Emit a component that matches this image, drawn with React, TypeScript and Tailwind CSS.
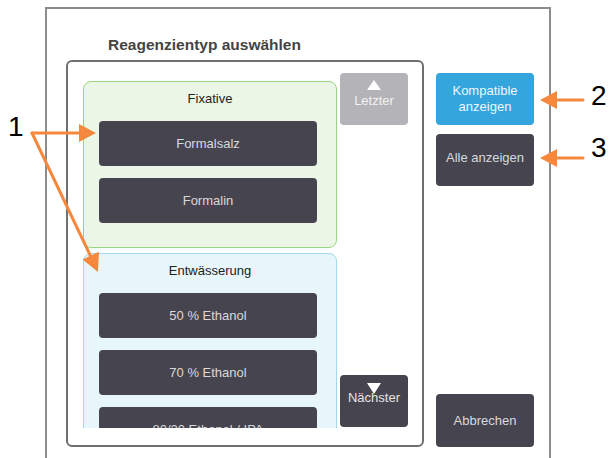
const font = { fontFamily: '"Liberation Sans", Arial, sans-serif' };

const ReagentButton = ({ label }: { label: string }) => (
  <div className="ml-[15px] flex h-[45px] w-[218px] shrink-0 items-center justify-center rounded-[4px] bg-[#46454f] text-[13px] text-[#d9d9dc]">
    {label}
  </div>
);

const Group = ({
  title,
  items,
  className,
}: {
  title: string;
  items: string[];
  className: string;
}) => (
  <div className={`flex w-[254px] shrink-0 flex-col gap-[12px] rounded-[8px] border ${className}`}>
    <div className="-mb-[12px] h-[39px] pt-[9px] text-center text-[13px] leading-[16px] text-[#222]">{title}</div>
    {items.map((item) => (
      <ReagentButton key={item} label={item} />
    ))}
  </div>
);

// Pfeile und Nummern der Beschriftung
const Callouts = () => (
  <>
    <svg className="pointer-events-none absolute inset-0" width="610" height="458">
      <g stroke="#f5883c" strokeWidth="3" fill="none" strokeLinecap="round">
        <line x1="32" y1="133" x2="82" y2="133" />
        <line x1="32" y1="133" x2="91" y2="257" />
        <line x1="583" y1="100" x2="555" y2="100" />
        <line x1="583" y1="158" x2="555" y2="158" />
      </g>
      <g fill="#f5883c">
        <polygon points="96,133 79,124 79,142" />
        <polygon points="98,272 82.6,259.5 99,251.7" />
        <polygon points="540,100 557,91 557,109" />
        <polygon points="540,158 557,149 557,167" />
      </g>
    </svg>
    <div className="absolute left-[8px] top-[113px] text-[28px] leading-[28px] text-black">1</div>
    <div className="absolute left-[591px] top-[82px] text-[28px] leading-[28px] text-black">2</div>
    <div className="absolute left-[591px] top-[134px] text-[28px] leading-[28px] text-black">3</div>
  </>
);

export default function App() {
  return (
    <div className="relative h-[458px] w-[610px] overflow-hidden bg-white" style={font}>
      <div className="ml-[45px] mt-[7px] flex h-[470px] w-[506px] border-2 border-[#8c8c8c]">
        {/* linke Spalte */}
        <div className="pl-[19px]">
          <div className="ml-[42px] pt-[28px] text-[15.5px] font-bold leading-[16px] text-[#444]">
            Reagenzientyp auswählen
          </div>
          <div className="mt-[7px] flex h-[387px] w-[358px] rounded-[6px] border-2 border-[#6f6f6f]">
            <div className="ml-[15px] mt-[19px] flex h-[347px] flex-col overflow-hidden">
              <Group
                title="Fixative"
                items={['Formalsalz', 'Formalin']}
                className="h-[167px] border-[#98d680] bg-[#ebf6e7]"
              />
              <Group
                title="Entwässerung"
                items={['50 % Ethanol', '70 % Ethanol', '80/20 Ethanol / IPA']}
                className="mt-[5px] pb-[24px] border-[#9fdcef] bg-[#e7f6fb]"
              />
            </div>
            <div className="ml-[3px] mt-[11px] flex h-[354px] flex-col justify-between">
              <div className="flex h-[52px] w-[68px] flex-col items-center rounded-[4px] bg-[#b4b3b8] pt-[7px] text-[13px] leading-[16px] text-[#f2f2f2]">
                <div className="h-0 w-0 border-x-[7px] border-b-[10px] border-x-transparent border-b-white" />
                <div className="mt-[3px]">Letzter</div>
              </div>
              <div className="flex h-[52px] w-[68px] flex-col items-center rounded-[4px] bg-[#46454f] pt-[8px] text-[13px] leading-[16px] text-[#e4e4e6]">
                <div className="h-0 w-0 border-x-[7px] border-t-[11px] border-x-transparent border-t-white" />
                <div className="-mt-[4px]">Nächster</div>
              </div>
            </div>
          </div>
        </div>
        {/* rechte Spalte */}
        <div className="ml-[12px] flex flex-col pt-[64px]">
          <div className="flex h-[52px] w-[98px] flex-col items-center justify-center rounded-[4px] bg-[#35a5dd] text-center text-[13px] leading-[16px] text-[#eef7fc]">
            <div>Kompatible</div>
            <div>anzeigen</div>
          </div>
          <div className="mt-[9px] flex h-[52px] w-[98px] items-start justify-center rounded-[4px] bg-[#46454f] pt-[16px] text-[13px] leading-[16px] text-[#d9d9dc]">
            Alle anzeigen
          </div>
          <div className="mt-[208px] flex h-[53px] w-[98px] items-center justify-center rounded-[4px] bg-[#46454f] text-[13px] text-[#d9d9dc]">
            Abbrechen
          </div>
        </div>
      </div>
      <Callouts />
    </div>
  );
}
